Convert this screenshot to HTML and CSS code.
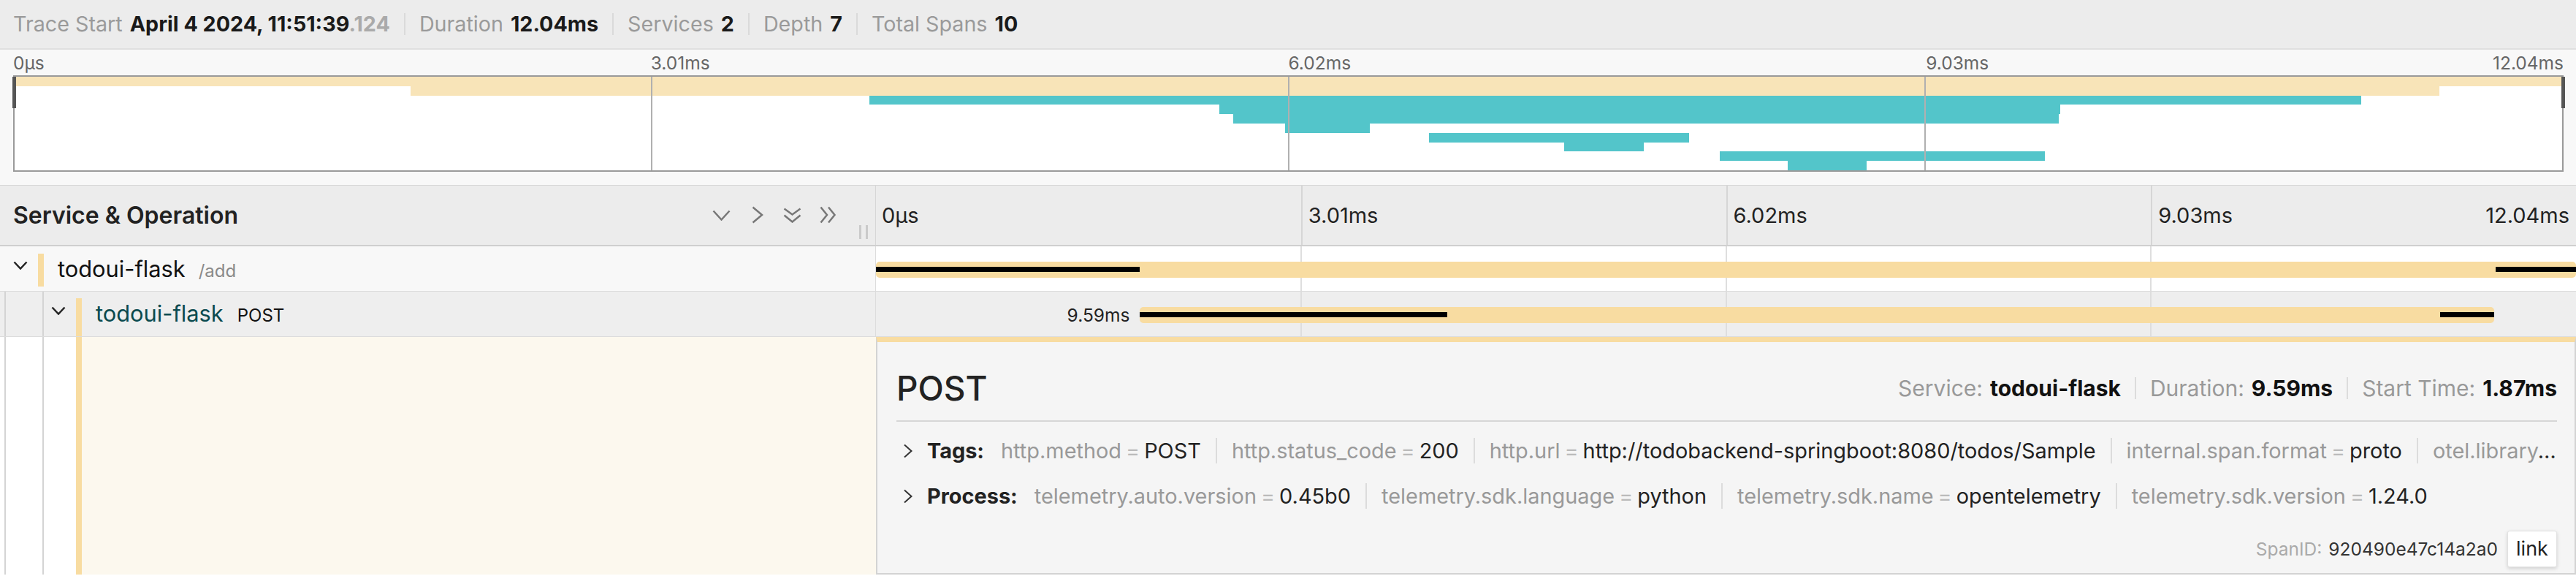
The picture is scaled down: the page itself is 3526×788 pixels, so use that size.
FILE: index.html
```html
<!DOCTYPE html>
<html lang="en">
<head>
<meta charset="utf-8">
<title>Trace</title>
<link rel="stylesheet" href="styles.css">
</head>
<body>
<header class="overview">
  <div class="ov-item"><span class="ov-label">Trace Start</span><span class="ov-value">April 4 2024, 11:51:39<span class="ov-ms">.124</span></span></div>
  <div class="ov-item"><span class="ov-label">Duration</span><span class="ov-value">12.04ms</span></div>
  <div class="ov-item"><span class="ov-label">Services</span><span class="ov-value">2</span></div>
  <div class="ov-item"><span class="ov-label">Depth</span><span class="ov-value">7</span></div>
  <div class="ov-item"><span class="ov-label">Total Spans</span><span class="ov-value">10</span></div>
</header>

<section class="minimap">
  <div class="mm-ticks">
    <div>0µs</div>
    <div>3.01ms</div>
    <div>6.02ms</div>
    <div class="mm-tick-last"><span>9.03ms</span><span>12.04ms</span></div>
  </div>
  <div class="mm-canvas">
    <div class="mm-row"><div class="mm-bar o" style="margin-left:0%;width:100%"></div></div>
    <div class="mm-row"><div class="mm-bar o" style="margin-left:15.53%;width:79.65%"></div></div>
    <div class="mm-row"><div class="mm-bar t" style="margin-left:33.55%;width:58.56%"></div></div>
    <div class="mm-row"><div class="mm-bar t" style="margin-left:47.29%;width:33.01%"></div></div>
    <div class="mm-row"><div class="mm-bar t" style="margin-left:47.83%;width:32.41%"></div></div>
    <div class="mm-row"><div class="mm-bar t" style="margin-left:49.87%;width:3.33%"></div></div>
    <div class="mm-row"><div class="mm-bar t" style="margin-left:55.52%;width:10.21%"></div></div>
    <div class="mm-row"><div class="mm-bar t" style="margin-left:60.83%;width:3.13%"></div></div>
    <div class="mm-row"><div class="mm-bar t" style="margin-left:66.93%;width:12.76%"></div></div>
    <div class="mm-row"><div class="mm-bar t" style="margin-left:69.60%;width:3.10%"></div></div>
    <div class="mm-handle l"></div>
    <div class="mm-handle r"></div>
  </div>
</section>

<section class="trace">
  <div class="tr-head">
    <div class="th-left">
      <div class="th-title">Service &amp; Operation</div>
      <div class="th-icons">
        <svg class="ic ic1" width="25" height="15" viewBox="0 0 25 15"><polyline points="1.5,1.5 12.5,13.5 23.5,1.5"/></svg>
        <svg class="ic ic2" width="16" height="24" viewBox="0 0 16 24"><polyline points="1.5,1.5 14,12 1.5,22.5"/></svg>
        <svg class="ic ic3" width="25" height="21" viewBox="0 0 25 21"><polyline points="1.5,1.5 12.5,9.5 23.5,1.5"/><polyline points="1.5,10.5 12.5,19.5 23.5,10.5"/></svg>
        <svg class="ic ic4" width="23" height="24" viewBox="0 0 23 24"><polyline points="1.5,1.5 10,12 1.5,22.5"/><polyline points="12,1.5 20.5,12 12,22.5"/></svg>
      </div>
      <div class="resizer"></div>
    </div>
    <div class="th-right">
      <div class="tick">0µs</div>
      <div class="tick">3.01ms</div>
      <div class="tick">6.02ms</div>
      <div class="tick tick-last"><span>9.03ms</span><span>12.04ms</span></div>
    </div>
  </div>

  <div class="row r1">
    <div class="row-left">
      <div class="tog">
        <svg class="chev" width="20" height="12" viewBox="0 0 20 12"><polyline points="1.5,1.5 10,10.5 18.5,1.5"/></svg>
      </div>
      <div class="name"><span><span class="svc">todoui-flask</span><span class="op">/add</span></span></div>
    </div>
    <div class="row-right">
      <div class="bar" style="width:100%"><i class="cp" style="width:15.51%"></i><i class="fill"></i><i class="cp" style="width:4.73%"></i></div>
    </div>
  </div>

  <div class="row r2">
    <div class="row-left">
      <div class="guide"></div>
      <div class="tog guided">
        <svg class="chev" width="20" height="12" viewBox="0 0 20 12"><polyline points="1.5,1.5 10,10.5 18.5,1.5"/></svg>
      </div>
      <div class="name"><span><span class="svc">todoui-flask</span><span class="op">POST</span></span></div>
    </div>
    <div class="row-right">
      <div class="lbl" style="width:15.53%">9.59ms</div>
      <div class="bar" style="width:79.65%"><i class="cp" style="width:22.67%"></i><i class="fill"></i><i class="cp" style="width:3.98%"></i></div>
    </div>
  </div>

  <div class="detail">
    <div class="detail-left">
      <div class="guide"></div>
      <div class="guide"></div>
      <div class="accent"></div>
      <div class="cream"></div>
    </div>
    <div class="info">
      <div class="info-head">
        <h2 class="info-title">POST</h2>
        <div class="labeled">
          <div class="li"><span class="li-label">Service:</span><span class="li-value">todoui-flask</span></div>
          <div class="li"><span class="li-label">Duration:</span><span class="li-value">9.59ms</span></div>
          <div class="li"><span class="li-label">Start Time:</span><span class="li-value">1.87ms</span></div>
        </div>
      </div>
      <div class="divider"></div>
      <div class="kv-row">
        <svg class="kv-chev" width="14" height="20" viewBox="0 0 14 20"><polyline points="2,1.5 11.5,10 2,18.5"/></svg>
        <span class="kv-title">Tags:</span>
        <div class="kv-list"><span class="kv"><span class="k">http.method</span><span class="d">=</span><span class="v">POST</span></span><span class="kv"><span class="k">http.status_code</span><span class="d">=</span><span class="v">200</span></span><span class="kv"><span class="k">http.url</span><span class="d">=</span><span class="v">http://todobackend-springboot:8080/todos/Sample</span></span><span class="kv"><span class="k">internal.span.format</span><span class="d">=</span><span class="v">proto</span></span><span class="kv"><span class="k">otel.library.name</span><span class="d">=</span><span class="v">opentelemetry.instrumentation.requests</span></span><span class="kv"><span class="k">span.kind</span><span class="d">=</span><span class="v">client</span></span></div>
      </div>
      <div class="kv-row">
        <svg class="kv-chev" width="14" height="20" viewBox="0 0 14 20"><polyline points="2,1.5 11.5,10 2,18.5"/></svg>
        <span class="kv-title">Process:</span>
        <div class="kv-list"><span class="kv"><span class="k">telemetry.auto.version</span><span class="d">=</span><span class="v">0.45b0</span></span><span class="kv"><span class="k">telemetry.sdk.language</span><span class="d">=</span><span class="v">python</span></span><span class="kv"><span class="k">telemetry.sdk.name</span><span class="d">=</span><span class="v">opentelemetry</span></span><span class="kv"><span class="k">telemetry.sdk.version</span><span class="d">=</span><span class="v">1.24.0</span></span></div>
      </div>
      <div class="debug">
        <span class="dbg-label">SpanID:</span><span class="dbg-id">920490e47c14a2a0</span>
        <button class="link-btn" type="button">link</button>
      </div>
    </div>
  </div>
</section>
</body>
</html>
```

FILE: styles.css
```css
* { box-sizing: border-box; margin: 0; padding: 0; }
html, body { background: #fff; }
body {
  margin: 0;
  width: 3526px;
  overflow: hidden;
  font-family: Inter, "Noto Sans", "Liberation Sans", sans-serif;
  color: #222;
}

/* ---------- overview header ---------- */
.overview {
  display: flex;
  align-items: center;
  height: 68px;
  background: #ececec;
  border-bottom: 2px solid #e0e0e0;
  font-size: 28.7px;
  white-space: nowrap;
}
.ov-item {
  padding: 0 19px;
  line-height: 30px;
  border-left: 2px solid #dadada;
}
.ov-item:first-child { border-left: 0; padding-left: 18px; }
.ov-label { color: #9a9a9a; margin-right: 10px; }
.ov-value { font-weight: 700; color: #1a1a1a; }
.ov-ms { color: #aaa; }

/* ---------- minimap ---------- */
.minimap {
  background: #f8f8f8;
  padding: 0 17px 18px 18px;
}
.mm-ticks {
  display: grid;
  grid-template-columns: repeat(4, 1fr);
  height: 35px;
  padding-top: 2px;
  line-height: 33px;
  font-size: 24.5px;
  color: #666;
}
.mm-tick-last { display: flex; justify-content: space-between; }
.mm-canvas {
  position: relative;
  border: 2px solid #9a9a9a;
  background: #fff;
}
.mm-canvas::after {
  content: "";
  position: absolute;
  inset: 0;
  pointer-events: none;
  background:
    linear-gradient(#b0b0b0, #b0b0b0) 25% 0 / 2px 100% no-repeat,
    linear-gradient(#b0b0b0, #b0b0b0) 50% 0 / 2px 100% no-repeat,
    linear-gradient(#b0b0b0, #b0b0b0) 75% 0 / 2px 100% no-repeat;
}
.mm-row { height: 12.8px; }
.mm-bar { height: 100%; }
.mm-bar.o { background: #f8e4b8; }
.mm-bar.t { background: #53c5ca; }
.mm-handle {
  position: absolute;
  top: 0;
  width: 5px;
  height: 43px;
  background: #555;
  z-index: 1;
}
.mm-handle.l { left: -3px; }
.mm-handle.r { right: -4px; }

/* ---------- trace header ---------- */
.tr-head {
  display: grid;
  grid-template-columns: 1199px 1fr;
  height: 84px;
  background: #ececec;
  border-top: 1px solid #d6d6d6;
  border-bottom: 2px solid #cfcfcf;
}
.th-left {
  display: flex;
  align-items: center;
  padding: 0 10px 0 18px;
  border-right: 1px solid #d6d6d6;
}
.th-title {
  flex: 1;
  font-size: 32px;
  font-weight: 600;
  color: #222;
  white-space: nowrap;
}
.th-icons { display: flex; align-items: center; }
.ic { display: block; fill: none; stroke: #777; stroke-width: 2.5; }
.ic2 { margin-left: 29px; }
.ic3 { margin-left: 27px; }
.ic4 { margin-left: 25px; }
.resizer {
  align-self: flex-end;
  margin: 0 0 8px 31px;
  width: 12px;
  height: 19px;
  border-left: 3px solid #cacaca;
  border-right: 3px solid #cacaca;
}
.th-right {
  display: grid;
  grid-template-columns: repeat(4, 1fr);
  font-size: 29px;
  line-height: 81px;
  color: #222;
  white-space: nowrap;
}
.tick { padding-left: 8px; border-left: 2px solid #d6d6d6; }
.tick:first-child { border-left: 0; }
.tick-last { display: flex; justify-content: space-between; padding-right: 9px; }

/* ---------- span rows ---------- */
.row {
  display: grid;
  grid-template-columns: 1199px 1fr;
  height: 62px;
  border-bottom: 1px solid #dcdcdc;
}
.row-left {
  display: flex;
  align-items: stretch;
  border-right: 1px solid #dcdcdc;
  white-space: nowrap;
}
.r1 .row-left { background: #f8f8f8; }
.r2 .row-left { background: #eeeeee; }

.guide, .guided {
  background-image: linear-gradient(#d4d4d4, #d4d4d4);
  background-position: 6px 0;
  background-size: 2px 100%;
  background-repeat: no-repeat;
}
.guide { width: 52px; flex: none; }
.tog {
  width: 52px;
  flex: none;
  display: flex;
  align-items: flex-start;
  padding: 20px 0 0 18px;
}
.chev { display: block; fill: none; stroke: #222; stroke-width: 2.5; }

.name {
  display: flex;
  align-items: center;
  border-left: 8px solid #f8dca1;
  padding-left: 19px;
  font-size: 30.8px;
}
.r1 .name { margin: 10px 0 6px; padding-bottom: 3px; }
.r2 .name { margin: 9px 0 0; padding-bottom: 10px; }
.svc { color: #111; }
.r2 .svc { color: #0b4a4f; }
.op { font-size: 24px; margin-left: 18px; color: #8a8a8a; }
.r2 .op { color: #111; margin-left: 19px; }

.row-right {
  display: flex;
  align-items: center;
  padding-top: 3px;
  background-image:
    linear-gradient(#dedede, #dedede),
    linear-gradient(#dedede, #dedede),
    linear-gradient(#dedede, #dedede);
  background-position: 25% 0, 50% 0, 75% 0;
  background-size: 2px 100%;
  background-repeat: no-repeat;
}
.r1 .row-right { background-color: #fff; }
.r2 .row-right { background-color: #eeeeee; }

.bar {
  flex: none;
  display: flex;
  align-items: center;
  height: 22px;
  background: #f8dca1;
  border-radius: 5px;
  overflow: hidden;
}
.cp { display: block; height: 7px; background: #000; flex: none; }
.fill { display: block; flex: 1; }
.lbl {
  flex: none;
  text-align: right;
  padding-right: 14px;
  font-size: 24.5px;
  color: #222;
  white-space: nowrap;
}

/* ---------- detail row ---------- */
.detail {
  display: grid;
  grid-template-columns: 1199px 1fr;
}
.detail-left { display: flex; background: #fff; }
.accent { width: 8px; flex: none; background: #f8dca1; }
.cream { flex: 1; background: #fcf8ee; }

.info {
  min-width: 0;
  background: #f5f5f5;
  border: 2px solid #d3d3d3;
  border-top: 7px solid #f8dca1;
  padding: 26px 24px 8px 26px;
}
.info-head {
  display: flex;
  align-items: center;
  justify-content: space-between;
  height: 74px;
}
.info-title { font-size: 46px; font-weight: 500; color: #222; }
.labeled {
  display: flex;
  font-size: 30px;
  line-height: 30px;
  white-space: nowrap;
}
.li { padding: 0 19px; border-left: 2px solid #dcdcdc; }
.li:first-child { border-left: 0; }
.li:last-child { padding-right: 0; }
.li-label { color: #999; margin-right: 10px; }
.li-value { font-weight: 700; color: #111; }

.divider { height: 2px; background: #d6d6d6; margin: 7px 0 9px; }

.kv-row {
  display: flex;
  align-items: center;
  height: 62px;
  font-size: 28.9px;
  white-space: nowrap;
}
.kv-chev {
  flex: none;
  display: block;
  margin: 0 19px 0 9px;
  fill: none;
  stroke: #333;
  stroke-width: 2;
}
.kv-title { flex: none; font-weight: 700; color: #222; margin-right: 23px; }
.kv-list {
  flex: 1;
  min-width: 0;
  overflow: hidden;
  text-overflow: ellipsis;
  white-space: nowrap;
  line-height: 36px;
}
.kv { padding: 0 20px; border-left: 2px solid #dcdcdc; }
.kv:first-child { padding-left: 0; border-left: 0; }
.k { color: #999; }
.d { color: #bbb; padding: 0 6px; }
.v { color: #222; }

.debug {
  display: flex;
  justify-content: flex-end;
  align-items: center;
  margin-top: 16px;
  height: 50px;
  font-size: 24.5px;
  white-space: nowrap;
}
.dbg-label { color: #aaa; margin-right: 9px; }
.dbg-id { color: #333; }
.link-btn {
  margin-left: 13px;
  width: 68px;
  height: 50px;
  background: #fff;
  border: 1px solid #e2e2e2;
  border-radius: 3px;
  box-shadow: 0 2px 5px rgba(0, 0, 0, 0.15);
  font-family: inherit;
  font-size: 27px;
  color: #222;
  display: flex;
  align-items: center;
  justify-content: center;
}
```
